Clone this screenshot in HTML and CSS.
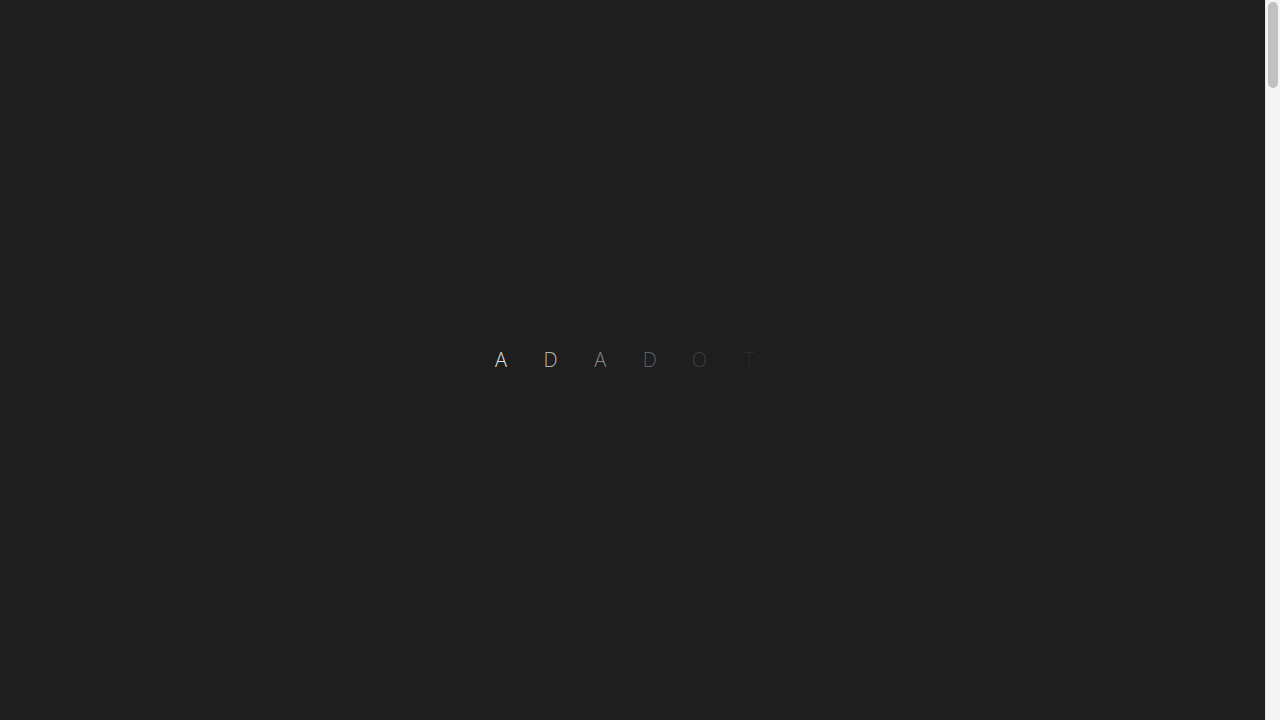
FILE: index.html
```html
<!DOCTYPE html>
<html lang="en">
<head>
<meta charset="utf-8">
<title>Loading</title>
<link rel="stylesheet" href="styles.css">
</head>
<body>
<section class="loader">
  <div class="word">
    <span class="l l1">A</span><span class="l l2">D</span><span class="l l3">A</span><span class="l l4">D</span><span class="l l5">O</span><span class="l l6">T</span>
  </div>
</section>
<div class="rest"></div>
<div class="scrollbar"><div class="thumb"></div></div>
</body>
</html>
```
FILE: styles.css
```css
html, body {
  margin: 0;
  padding: 0;
  background: #1e1e1e;
}
html {
  scrollbar-width: none;
}
body {
  padding-right: 15px;
}
.loader {
  height: 100vh;
  display: flex;
  align-items: center;
  justify-content: center;
}
.word {
  display: flex;
  padding-right: 15px;
  font-family: "Open Sans", "Liberation Sans", sans-serif;
  font-weight: 300;
  font-size: 20px;
  line-height: 1;
}
.l {
  display: inline-block;
  width: 49.6px;
  text-align: center;
}
.l1 { color: #e2e2e2; }
.l2 { color: #b4b4b4; }
.l3 { color: #8a8a8a; }
.l4 { color: #5e5e5e; }
.l5 { color: #3e3e3e; }
.l6 { color: #2c2c2c; }
.rest {
  height: 5200px;
}
.scrollbar {
  position: fixed;
  top: 0;
  right: 0;
  bottom: 0;
  width: 15px;
  background: #f5f5f5;
  border-left: 1px solid #e8e8e8;
  box-sizing: border-box;
}
.thumb {
  margin: 2px 2px 0 2px;
  height: 86px;
  background: #c1c1c1;
  border-radius: 6px;
}
```
